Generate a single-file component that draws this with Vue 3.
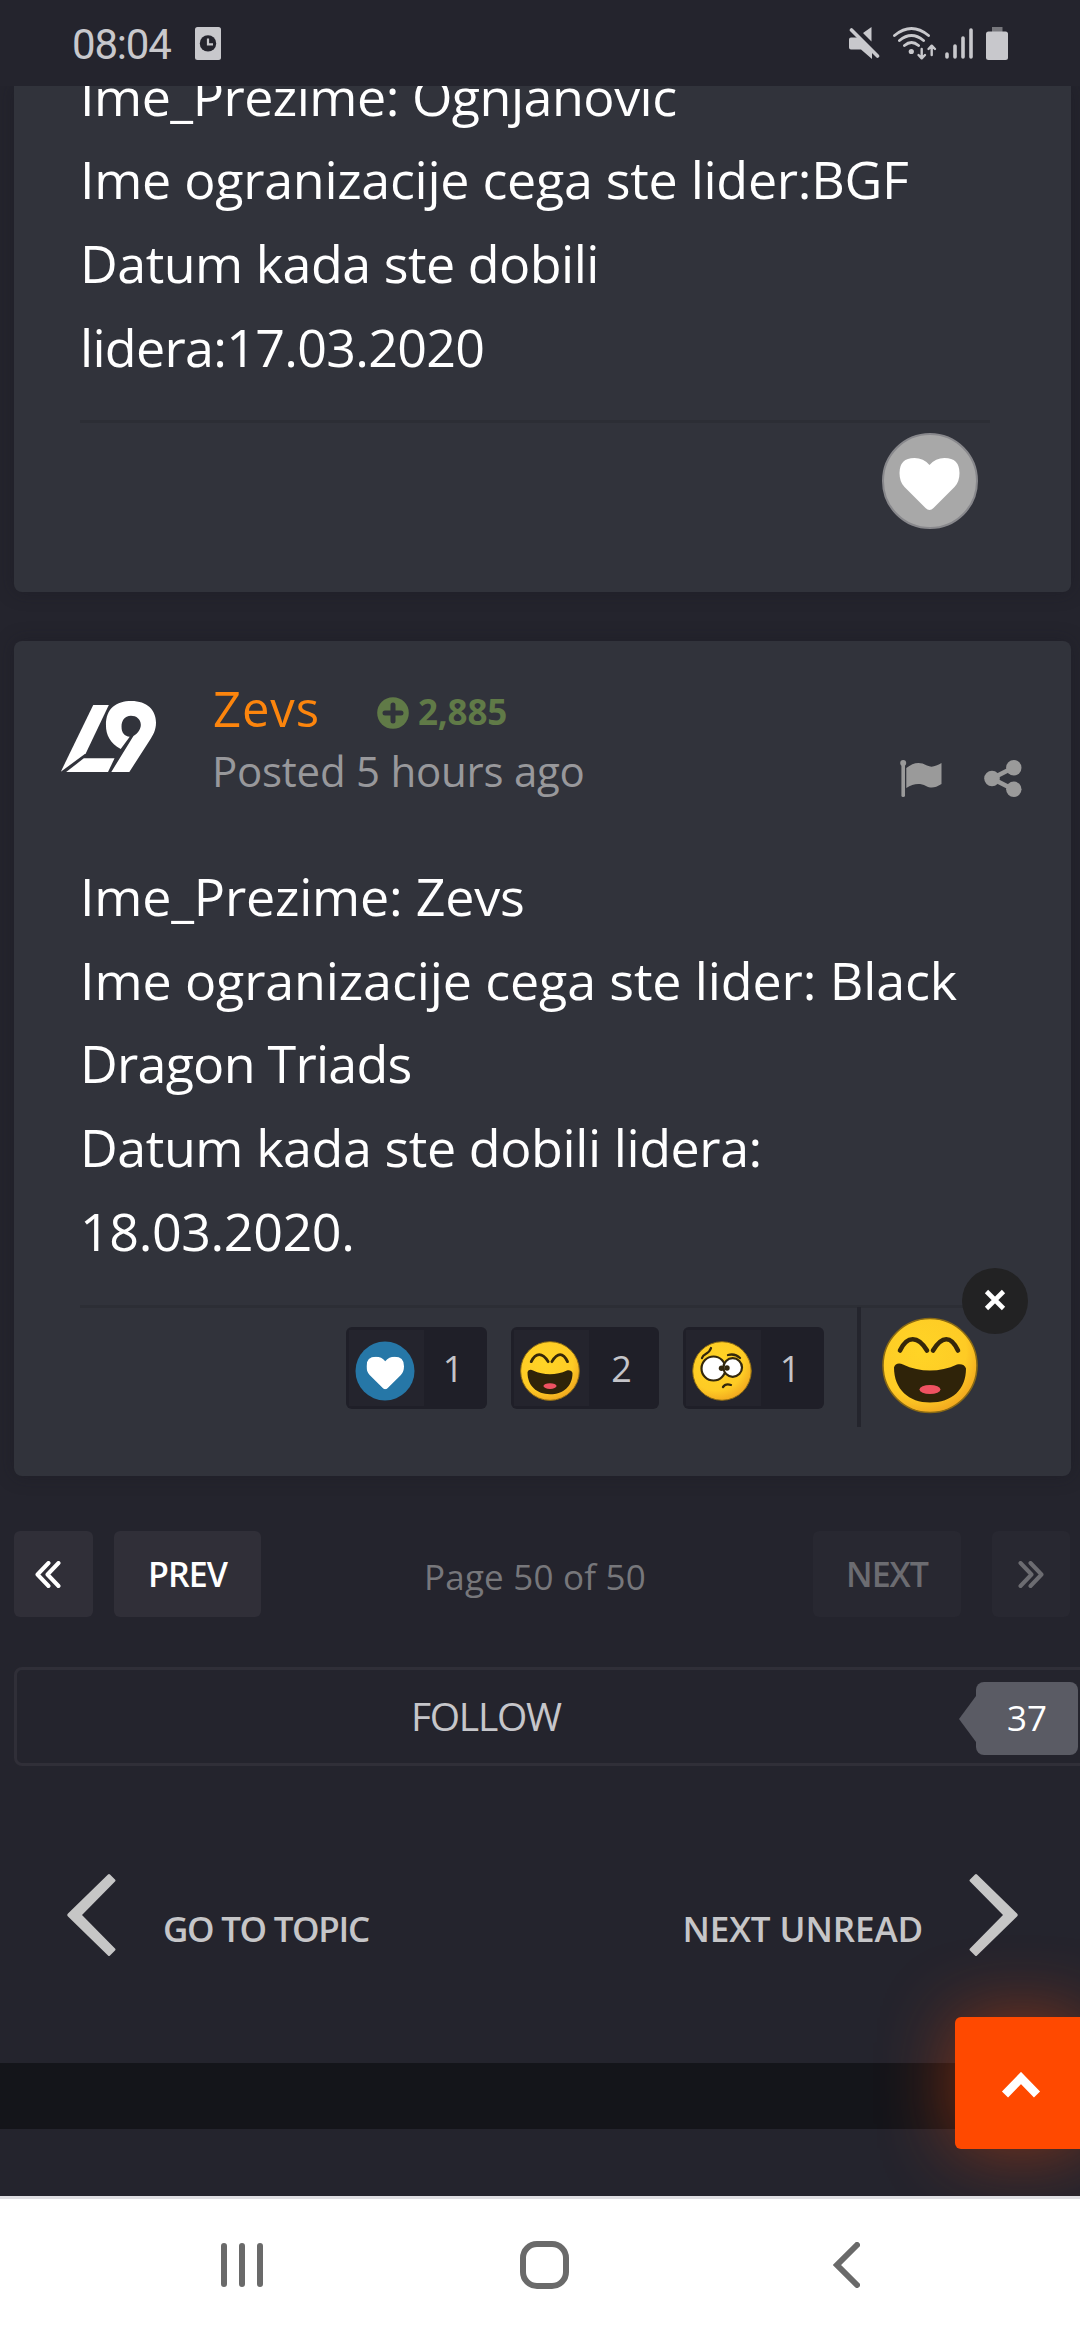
<script setup>
const firstPost = [
  { text: 'Ime_Prezime: Ognjanovic', tracking: -0.5 },
  { text: 'Ime ogranizacije cega ste lider:BGF', tracking: -0.28 },
  { text: 'Datum kada ste dobili', tracking: -0.5 },
  { text: 'lidera:17.03.2020', tracking: -0.7 }
]
const secondPost = [
  { text: 'Ime_Prezime: Zevs', tracking: -0.2 },
  { text: 'Ime ogranizacije cega ste lider: Black', tracking: -0.12 },
  { text: 'Dragon Triads', tracking: -0.75 },
  { text: 'Datum kada ste dobili lidera:', tracking: -0.42 },
  { text: '18.03.2020.', tracking: -0.4 }
]
</script>

<template>
  <div class="screen">
    <svg class="defs" width="0" height="0" aria-hidden="true">
      <defs>
        <radialGradient id="face" cx="0.4" cy="0.35" r="0.75">
          <stop offset="0" stop-color="#ffd426" />
          <stop offset="0.65" stop-color="#fecb25" />
          <stop offset="1" stop-color="#ec9a1c" />
        </radialGradient>
        <symbol id="laugh" viewBox="0 0 96 96">
          <circle cx="48" cy="48" r="47" fill="url(#face)" stroke="#8a6a14" stroke-width="1.6" />
          <path d="M18 33C25 18 36 18 45 33M51 33C60 18 69 18 76 33" fill="none" stroke="#35270a" stroke-width="4.6" stroke-linecap="round" />
          <path d="M12 50C13 46 17 45 21 47C38 55 58 55 75 47C79 46 83 47 84 51C84 72 70 85 48 85C27 85 12 72 12 50Z" fill="#2f2309" />
          <ellipse cx="48" cy="72" rx="10.5" ry="4.6" fill="#ef5261" />
        </symbol>
        <symbol id="heart" viewBox="0 0 60 52">
          <path d="M30 52Q28 52 26 50L5 29Q0 24 0 15Q0 0 15 0Q24 0 30 7Q36 0 45 0Q60 0 60 15Q60 24 55 29L34 50Q32 52 30 52Z" fill="#fff" />
        </symbol>
      </defs>
    </svg>

    <header class="status">
      <span class="clock">08:04</span>
      <svg class="alarm" viewBox="0 0 26 33">
        <rect width="26" height="33" rx="2.5" fill="#c8c8cc" />
        <circle cx="13" cy="16.4" r="8.2" fill="#24242d" />
        <path d="M13 11.5v5.8h5" fill="none" stroke="#c8c8cc" stroke-width="2.2" />
      </svg>
      <div class="status-icons">
        <svg width="31" height="33" viewBox="0 0 31 33" fill="#c8c8cc">
          <path d="M2 10.500H9L23 25V32L12 22.500H2Q0 22.500 0 20.500V12.500Q0 10.500 2 10.500ZM14 6L22.500 0V14.500Z" />
          <path d="M2.500 3L28.500 29" stroke="#c8c8cc" stroke-width="3.600" stroke-linecap="round" />
        </svg>
        <svg class="wifi" width="44" height="33" viewBox="0 0 44 33" fill="none" stroke="#c8c8cc" stroke-width="2.9" stroke-linecap="round" stroke-linejoin="round">
          <path d="M1.500 8.500Q18.500-5.500 35.500 8.500M6.500 13.500Q18.500 3.500 30.500 13.500M11.500 18.500Q18.500 12.500 25.500 18.500" />
          <circle cx="18.300" cy="24.500" r="2.600" fill="#c8c8cc" stroke="none" />
          <path d="M28.700 22V31M25.500 28L28.700 31.300L32 28M38.700 28V19M35.500 22L38.700 18.700L42 22" stroke-width="2.400" />
        </svg>
        <svg class="signal" width="28" height="32" viewBox="0 0 28 32" stroke="#c8c8cc" stroke-width="3.600" stroke-linecap="round">
          <path d="M2 27V30M10 19V30M18 11V30M26 3V30" />
        </svg>
        <svg class="battery" width="22" height="33" viewBox="0 0 22 33">
          <rect x="6" width="10.5" height="6" fill="#77777c" />
          <rect y="4.500" width="22" height="28.500" rx="2.500" fill="#c8c8cc" />
        </svg>
      </div>
    </header>

    <main class="page">
      <article class="card first">
        <div class="body">
          <p v-for="l in firstPost" :key="l.text" :style="{ letterSpacing: l.tracking + 'px' }">{{ l.text }}</p>
        </div>
        <div class="reactions">
          <div class="like"><svg width="61" height="52"><use href="#heart" /></svg></div>
        </div>
      </article>

      <article class="card second">
        <div class="post-head">
          <svg class="avatar" viewBox="148 903 234 213" preserveAspectRatio="none" fill="#fff">
            <path d="M229 915H267L211 1060L150 1115Z" />
            <path d="M206 1075H281L265 1116H163Z" />
            <path d="M296 1047C270 1030 260 1005 260 975C260 925 285 903 322 903C360 903 382 930 382 968C382 990 375 1005 366 1022L317 1116H273L327 1008C340 998 345 985 345 974C345 957 334 947 321 947C305 947 298 962 298 980C298 998 305 1008 318 1010Z" />
          </svg>
          <div class="meta">
            <div class="who">
              <span class="name">Zevs</span>
              <svg class="plus" viewBox="0 0 32 32"><circle cx="16" cy="16" r="15.8" fill="#607a47" /><path d="M16 8V24M8 16H24" stroke="#31333b" stroke-width="5" stroke-linecap="round" /></svg>
              <span class="score">2,885</span>
            </div>
            <div class="posted">Posted 5 hours ago</div>
          </div>
          <div class="actions">
            <svg width="42" height="37" viewBox="0 0 42 37" fill="#9a9a9a">
              <circle cx="3.2" cy="3" r="3" /><rect x="1.400" y="3" width="3.600" height="34" rx="1.600" />
              <path d="M6.300 8C13 3 19 1 27 5.500C32 8 36 6 41.500 3V24C35 28 31 28.500 26 26C19 22.500 13 24 6.300 28Z" />
            </svg>
            <svg width="38" height="37" viewBox="0 0 38 37" fill="#9a9a9a">
              <path d="M29.500 7.500L8 18.500L29.500 29.500" fill="none" stroke="#9a9a9a" stroke-width="4.600" />
              <circle cx="8" cy="18.500" r="7.800" /><circle cx="29.800" cy="7.700" r="7.700" /><circle cx="29.800" cy="29.300" r="7.700" />
            </svg>
          </div>
        </div>
        <div class="body">
          <p v-for="l in secondPost" :key="l.text" :style="{ letterSpacing: l.tracking + 'px' }">{{ l.text }}</p>
        </div>
        <div class="reactions">
          <div class="pill">
            <span class="emo"><svg viewBox="0 0 60 60"><circle cx="30" cy="30" r="29.500" fill="#2677a7" /><use href="#heart" x="11.500" y="15.500" width="37.500" height="33" /></svg></span>
            <span class="count">1</span>
          </div>
          <div class="pill wide">
            <span class="emo"><svg viewBox="0 0 60 60"><use href="#laugh" width="60" height="60" /></svg></span>
            <span class="count">2</span>
          </div>
          <div class="pill">
            <span class="emo">
              <svg viewBox="0 0 60 60" fill="none" stroke="#33270c" stroke-linecap="round">
                <circle cx="30" cy="30" r="29.300" fill="url(#face)" stroke="#8a6a14" />
                <circle cx="21.500" cy="27.500" r="12" fill="#fff" stroke-width="2.200" />
                <circle cx="40.700" cy="26.500" r="9.300" fill="#fff" stroke-width="2.200" />
                <circle cx="29.500" cy="27.300" r="2.700" fill="#33270c" stroke="none" /><circle cx="35" cy="27" r="2.700" fill="#33270c" stroke="none" />
                <path d="M10 17C11 12 17 14 19 7M36 14C40 13 45 14 48 17M31 46C33 43 36 43 39 44" stroke-width="2.300" />
              </svg>
            </span>
            <span class="count">1</span>
          </div>
          <div class="rule"></div>
          <div class="mine">
            <svg width="96" height="97"><use href="#laugh" /></svg>
            <div class="remove">
              <svg width="22" height="22" viewBox="0 0 22 22"><path d="M2.500 2.500L19.500 19.500M19.500 2.500L2.500 19.500" stroke="#fff" stroke-width="4.600" /></svg>
            </div>
          </div>
        </div>
      </article>

      <nav class="pager">
        <div class="btn small"><svg class="dbl" viewBox="0 0 26 27"><path d="M13.500 2L2.500 13.500L13.500 25M23.500 2L12.500 13.500L23.500 25" /></svg></div>
        <div class="btn prev">PREV</div>
        <div class="where">Page 50 of 50</div>
        <div class="btn next off">NEXT</div>
        <div class="btn small off"><svg class="dbl" viewBox="0 0 26 27"><path d="M2.500 2L13.500 13.500L2.500 25M12.500 2L23.500 13.500L12.500 25" /></svg></div>
      </nav>

      <div class="follow">
        <span class="follow-label">FOLLOW</span>
        <svg class="tip" width="17" height="46" viewBox="0 0 17 46"><path d="M17 0L0 23L17 46Z" fill="#5a5b64" /></svg>
        <span class="followers">37</span>
      </div>

      <div class="jump">
        <svg width="50" height="84" viewBox="0 0 50 84"><path d="M41 1.500Q42 0.500 43 1.500L48 6.500Q49 7.500 48 8.500L15 42L48 75.500Q49 76.500 48 77.500L43 82.500Q42 83.500 41 82.500L1 43.500Q-0.500 42 1 40.500Z" /></svg>
        <span class="topic">GO TO TOPIC</span>
        <span class="unread">NEXT UNREAD</span>
        <svg width="50" height="84" viewBox="0 0 50 84"><path d="M9 1.500Q8 0.500 7 1.500L2 6.500Q1 7.500 2 8.500L35 42L2 75.500Q1 76.500 2 77.500L7 82.500Q8 83.500 9 82.500L49 43.500Q50.500 42 49 40.500Z" /></svg>
      </div>

      <div class="band"></div>
      <div class="to-top">
        <svg width="40" height="27" viewBox="0 0 40 27"><path d="M4 22.500L20 6L36 22.500" fill="none" stroke="#fff" stroke-width="8.5" /></svg>
      </div>
    </main>

    <footer class="sysnav">
      <svg width="42" height="44" viewBox="0 0 42 44"><path d="M3 3V41M21 3V41M39 3V41" /></svg>
      <svg class="home" width="49" height="48" viewBox="0 0 49 48"><rect x="3" y="3" width="43" height="42" rx="14" /></svg>
      <svg class="back" width="27" height="46" viewBox="0 0 27 46"><path d="M24 3L4 23L24 43" /></svg>
    </footer>
  </div>
</template>

<style>
body { margin: 0; background: #24242d; }
</style>

<style scoped>
.screen {
  width: 1080px;
  height: 2340px;
  display: flex;
  flex-direction: column;
  overflow: hidden;
  background: #24242d;
  color: #fff;
  font-family: "Open Sans", "Noto Sans", sans-serif;
}
.defs { position: absolute; }
svg { display: block; flex: none; }
p { margin: 0; }

.status {
  flex: none;
  height: 86px;
  display: flex;
  align-items: flex-start;
  box-sizing: border-box;
  padding: 27px 72px 0;
  color: #c8c8cc;
}
.clock {
  width: 123px;
  margin-top: -7px;
  font: 400 42px/50px Roboto, sans-serif;
  letter-spacing: -1.2px;
}
.alarm { width: 26px; height: 33px; }
.status-icons { display: flex; margin-left: auto; }
.wifi { margin-left: 13px; }
.signal { margin-left: 8px; }
.battery { margin-left: 13px; }

.page {
  position: relative;
  flex: none;
  height: 2110px;
  overflow: hidden;
}
.card {
  width: 1057px;
  margin-left: 14px;
  border-radius: 8px;
  background: #31333b;
  box-shadow: 0 0 18px rgba(24, 22, 32, 0.35);
}
.first { height: 506px; overflow: hidden; border-radius: 0 0 8px 8px; }
.first .body { margin-top: -32.4px; }
.second { height: 835px; margin-top: 49px; }
.body {
  padding-left: 66px;
  font-size: 52px;
  line-height: 83.7px;
  white-space: nowrap;
}
.reactions {
  display: flex;
  justify-content: flex-end;
  align-items: flex-start;
  height: 160px;
  margin: 32px 81px 0 66px;
  padding-right: 12.5px;
  border-top: 3px solid #2c2e35;
}
.like {
  display: flex;
  align-items: center;
  justify-content: center;
  width: 92px;
  height: 92px;
  margin-top: 10px;
  border: 2px solid #88888c;
  border-radius: 50%;
  background: #a8a8a8;
}
.like svg { margin-top: 6px; }

.post-head { display: flex; align-items: flex-start; height: 213px; padding: 0 49px 0 46px; }
.avatar { width: 96px; height: 71px; margin-top: 60px; }
.meta { margin: 37px 0 0 57px; }
.who { display: flex; align-items: center; height: 60px; }
.name { width: 164px; color: #fc850d; font-size: 49px; line-height: 60px; letter-spacing: 0.9px; }
.plus { width: 32px; height: 32px; margin-top: 9px; }
.score { margin: 8px 0 0 9px; color: #607a47; font-size: 35px; font-weight: 700; line-height: 40px; letter-spacing: -0.2px; }
.posted { margin: 5px 0 0 -1px; color: #98989b; font-size: 42px; line-height: 56px; letter-spacing: -0.24px; white-space: nowrap; }
.actions { display: flex; gap: 42px; margin: 119px 0 0 auto; }

.pill {
  display: flex;
  align-items: center;
  box-sizing: border-box;
  width: 141px;
  height: 82px;
  margin: 19px 24px 0 0;
  padding-left: 3px;
  border-radius: 6px;
  background: #1f1f28;
}
.pill.wide { width: 148px; }
.emo { display: flex; width: 75px; height: 76px; background: #24242d; }
.emo svg { width: 60px; height: 60px; margin: 11px 0 0 6px; }
.count { flex: 1; padding: 2px 4px 0 0; text-align: center; color: #c4c4c9; font-size: 36px; line-height: 48px; }
.rule { width: 4px; height: 120px; margin: -1px 21px 0 9px; background: #24252d; }
.mine { position: relative; margin-top: 9px; }
.remove {
  position: absolute;
  left: 80px;
  top: -49px;
  display: flex;
  align-items: center;
  justify-content: center;
  width: 66px;
  height: 66px;
  border-radius: 50%;
  background: #222223;
}
.remove svg { margin-top: -2px; }

.pager { display: flex; align-items: center; height: 86px; margin: 55px 10px 0 14px; }
.btn {
  display: flex;
  align-items: center;
  justify-content: center;
  box-sizing: border-box;
  height: 86px;
  padding-bottom: 1px;
  border-radius: 6px;
  background: #302f38;
  font-size: 34px;
  font-weight: 600;
  letter-spacing: -1px;
}
.small { width: 79px; }
.small:first-child { padding-right: 12px; }
.small.off { width: 78px; margin-left: 31px; }
.prev { width: 147px; margin-left: 21px; }
.next { width: 148px; margin-left: auto; }
.off { background: #282831; color: #6c6c71; }
.dbl { width: 26px; height: 27px; margin-top: 2px; fill: none; stroke: currentColor; stroke-width: 4; stroke-linecap: round; stroke-linejoin: round; }
.where { margin: 5px 0 0 163px; color: #77777b; font-size: 35px; letter-spacing: 0.2px; }

.follow {
  display: flex;
  align-items: center;
  box-sizing: border-box;
  width: 1100px;
  height: 99px;
  margin: 50px 0 0 14px;
  border: 3px solid #302f38;
  border-radius: 8px;
}
.follow-label { width: 151px; margin: -2px 0 0 394px; color: #c6c6ca; font-size: 39px; letter-spacing: -1.3px; }
.tip { margin: 4px 0 0 397px; }
.followers {
  width: 102px;
  height: 73px;
  margin-top: 4px;
  border-radius: 8px;
  background: #5a5b64;
  font-size: 35px;
  line-height: 71px;
  text-align: center;
}

.jump { display: flex; align-items: center; height: 84px; margin: 107px 62px 0 67px; color: #c6c6c8; font-size: 35px; font-weight: 600; }
.jump svg { fill: #c6c6c6; }
.topic { margin: 27px 0 0 46px; letter-spacing: -1.3px; }
.unread { margin: 27px 45px 0 auto; letter-spacing: -0.1px; }

.band { height: 66px; margin-top: 106px; background: #14151a; }
.to-top {
  position: absolute;
  left: 955px;
  top: 1931px;
  display: flex;
  align-items: center;
  justify-content: center;
  width: 132px;
  height: 132px;
  border-radius: 6px;
  background: #ff4900;
  box-shadow: 0 0 75px rgba(255, 73, 0, 0.45);
}
.to-top svg { margin-top: 4px; }

.sysnav {
  flex: none;
  display: flex;
  align-items: center;
  box-sizing: border-box;
  height: 144px;
  padding: 0 0 9px 221px;
  border-top: 3px solid #dedee2;
  background: #fff;
}
.sysnav svg { fill: none; stroke: #6a6a6a; stroke-width: 6; stroke-linecap: round; }
.home { margin-left: 257px; }
.back { margin-left: 264px; }
</style>
